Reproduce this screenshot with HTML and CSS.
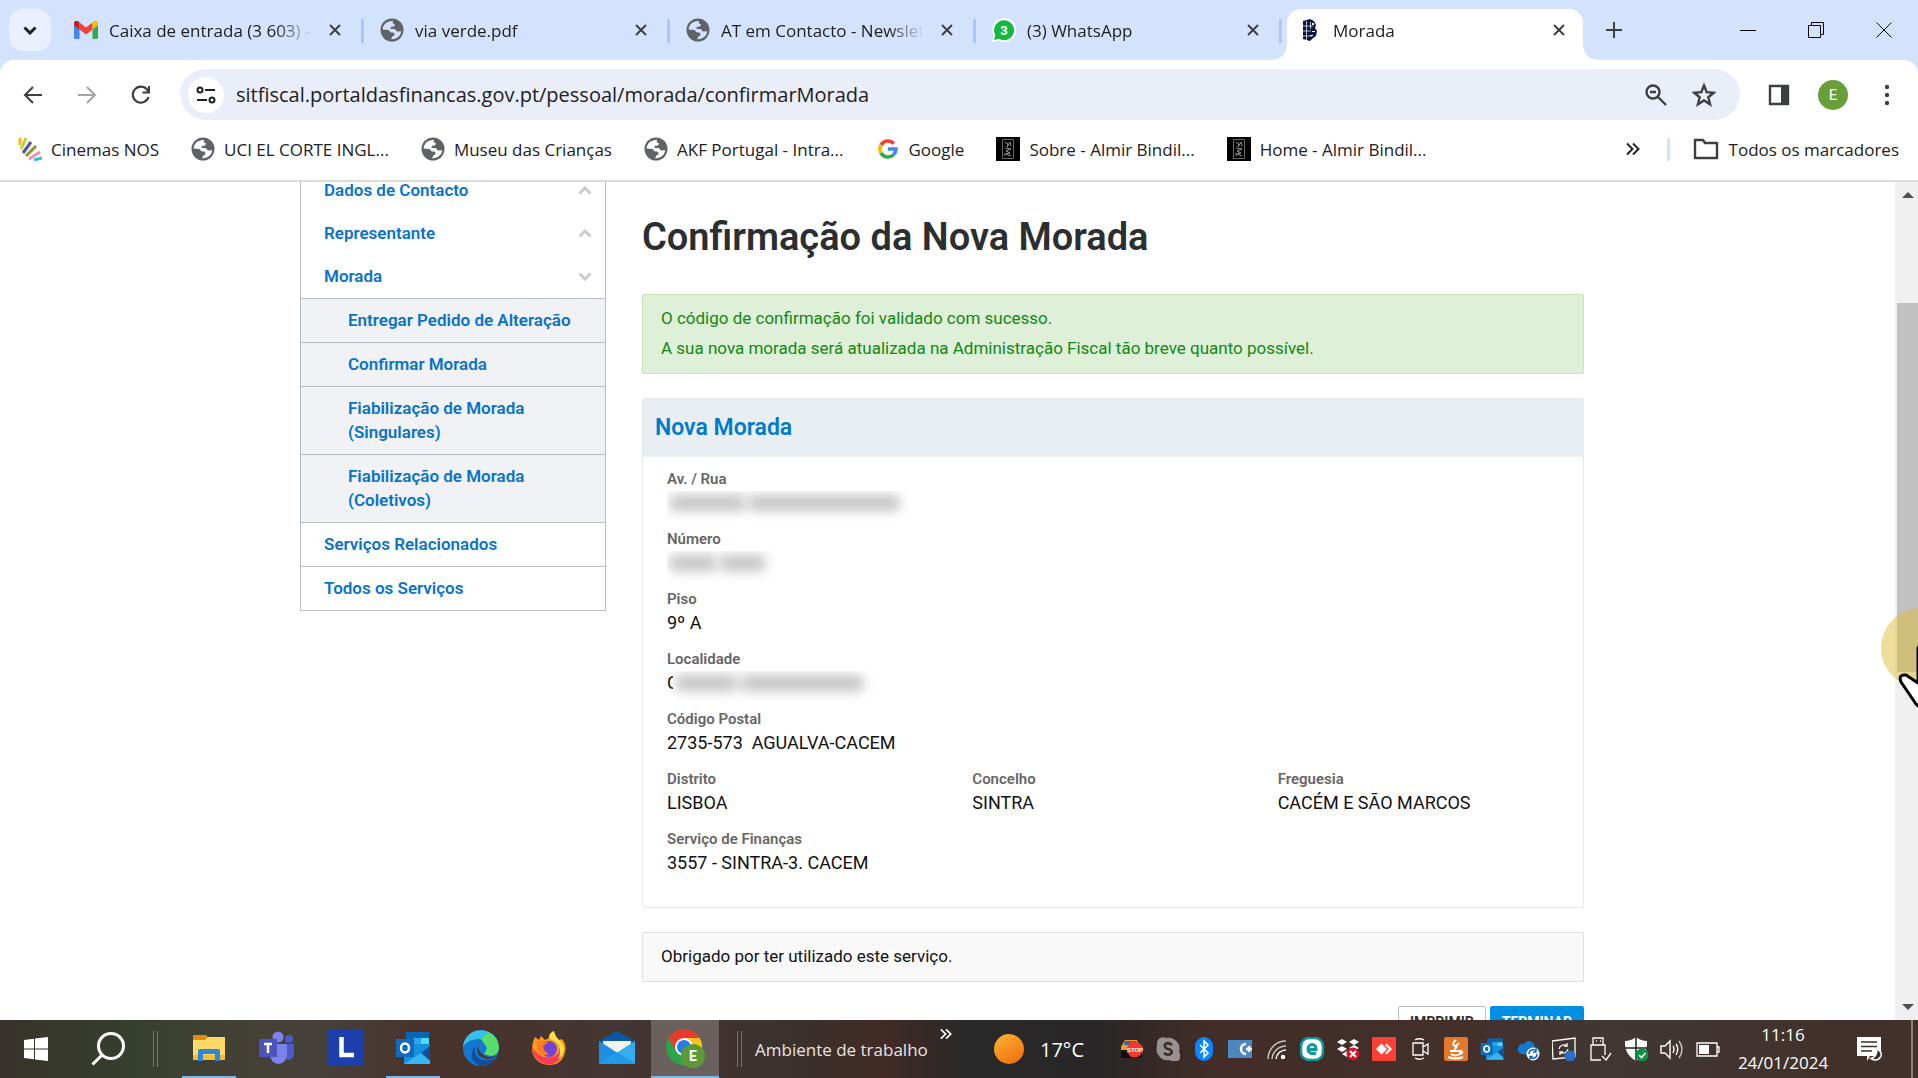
FILE: index.html
```html
<!DOCTYPE html>
<html lang="pt">
<head>
	<meta charset="UTF-8">
	<title>Morada</title>
	<link rel="stylesheet" href="styles.css">
</head>
<body>
	<svg class="defs" width="0" height="0">
		<symbol id="globe" viewBox="0 0 24 24">
			<circle cx="12" cy="12" r="11.5" fill="#5f6368"/>
			<path fill="currentColor" d="M10 3.2 13 2.8 12.6 5 15 6.4 14 8.4 11 8.8 10.4 11 14.6 11 17 13.6 21.3 13.2 A9.4 9.4 0 0 1 11 21.3 L12.4 18.4 14.6 17.2 14 14.8 10.4 14.2 8.6 12 2.6 11.6 A9.4 9.4 0 0 1 10 3.2Z"/>
		</symbol>
		<symbol id="close" viewBox="0 0 14 14">
			<path d="M2 2 12 12M12 2 2 12" fill="none" stroke="currentColor" stroke-width="2"/>
		</symbol>
		<symbol id="angle" viewBox="0 0 14 9">
			<path d="M1.5 7.5 7 2 12.5 7.5" fill="none" stroke="currentColor" stroke-width="3"/>
		</symbol>
		<symbol id="more" viewBox="0 0 14 14">
			<path d="M1 1.500 6.500 7 1 12.500M7 1.500 12.500 7 7 12.500" fill="none" stroke="currentColor" stroke-width="2"/>
		</symbol>
		<symbol id="poster" viewBox="0 0 24 24">
			<path fill="#000" d="M0 0H24V24H0Z"/>
			<path fill="none" stroke="#666" d="M6.500 2.500H17.500V21.500H6.500Z"/>
			<path fill="none" stroke="#999" d="M9 5 12 7 11 10 14 5 15 9M9 11 15 12 10 14 14 16 10 17 15 19M9 19V16"/>
		</symbol>
		<symbol id="outlook" viewBox="0 0 36 36">
			<path fill="#0a64b4" d="M11 2H34V20H11Z"/>
			<path fill="#28a8ea" d="M18 8H26V14H18Z"/>
			<path fill="#50d9ff" d="M26 8H34V14H26Z"/>
			<path fill="#1490df" d="M9 14H35V34H9Z"/>
			<path fill="#0f4f93" d="M26 23 35 16V31Z"/>
			<path fill="#35b8f1" d="M9 34 26 23 35 31V34Z"/>
			<path fill="#0f6cbd" d="M1 9H19V27H1Z"/>
			<ellipse cx="10" cy="18" rx="4" ry="4.500" fill="none" stroke="#fff" stroke-width="2.500"/>
		</symbol>
	</svg>

	<div class="browser">
		<div class="tabs">
			<button class="tab-search" aria-label="Pesquisar separadores"><svg width="14" height="9"><use href="#angle"/></svg></button>
			<div class="tab">
				<svg class="fav" viewBox="0 0 24 24">
					<path fill="#4285f4" d="M0 5 5.500 9V21H1.500A1.500 1.500 0 0 1 0 19.500Z"/>
					<path fill="#34a853" d="M24 5 18.500 9V21H22.500A1.500 1.500 0 0 0 24 19.500Z"/>
					<path fill="#ea4335" d="M5.500 4.500 12 9.500 18.500 4.500V11.500L12 16.500 5.500 11.500Z"/>
					<path fill="#c5221f" d="M0 6V5C0 2.500 3 2 4.500 3.500L5.500 4.500V11.500L0 7.500Z"/>
					<path fill="#fbbc04" d="M24 6V5C24 2.500 21 2 19.500 3.500L18.500 4.500V11.500L24 7.500Z"/>
				</svg>
				<span class="tab-title">Caixa de entrada (3 603) -</span>
				<button class="tab-close" aria-label="Fechar"><svg width="14" height="14"><use href="#close"/></svg></button>
			</div>
			<div class="tab">
				<svg class="fav"><use href="#globe"/></svg>
				<span class="tab-title">via verde.pdf</span>
				<button class="tab-close" aria-label="Fechar"><svg width="14" height="14"><use href="#close"/></svg></button>
			</div>
			<div class="tab">
				<svg class="fav"><use href="#globe"/></svg>
				<span class="tab-title">AT em Contacto - Newsletter</span>
				<button class="tab-close" aria-label="Fechar"><svg width="14" height="14"><use href="#close"/></svg></button>
			</div>
			<div class="tab">
				<svg class="fav" viewBox="0 0 24 24">
					<path fill="#fff" d="M0 24 1.500 17A12 12 0 1 1 7 22.800Z"/>
					<path fill="#12b83f" d="M2 22 3.300 17A10 10 0 1 1 7 20.800Z"/>
					<text x="12" y="17" text-anchor="middle" class="wa-count">3</text>
				</svg>
				<span class="tab-title">(3) WhatsApp</span>
				<button class="tab-close" aria-label="Fechar"><svg width="14" height="14"><use href="#close"/></svg></button>
			</div>
			<div class="tab active">
				<svg class="fav" viewBox="0 0 24 24">
					<path fill="#0c1440" d="M5 3 12 1 16 3 18 7 17 10 19 13 18 18 15 20 12 23 5 21Z"/>
					<path fill="none" stroke="#fff" stroke-width=".7" d="M5 8H15M5 13H13M5 18H14M8.500 3V22M12.500 4V11"/>
					<path fill="#fff" d="M14 5H16V7H14ZM14 13H17V14H14ZM12 17H15V18H12Z"/>
				</svg>
				<span class="tab-title">Morada</span>
				<button class="tab-close" aria-label="Fechar"><svg width="14" height="14"><use href="#close"/></svg></button>
			</div>
			<button class="new-tab" aria-label="Novo separador"><svg width="16" height="16"><path d="M8 0V16M0 8H16" stroke="#3c4043" stroke-width="2"/></svg></button>
			<div class="win">
				<button aria-label="Minimizar"><svg width="16" height="16"><path d="M0 8.500H16" stroke="#000"/></svg></button>
				<button aria-label="Restaurar"><svg width="16" height="16"><path d="M.500 3.500H12.500V15.500H.500ZM3.500 3.500V.500H15.500V12.500H12.500" fill="none" stroke="#000"/></svg></button>
				<button aria-label="Fechar janela"><svg width="16" height="16"><path d="M.500.500 15.500 15.500M15.500.500.500 15.500" stroke="#000"/></svg></button>
			</div>
		</div>

		<div class="toolbar">
			<button class="nav" aria-label="Anterior"><svg width="20" height="20"><path d="M19 10H2M10 2 2 10 10 18" fill="none" stroke="#3c4043" stroke-width="2"/></svg></button>
			<button class="nav" aria-label="Seguinte"><svg width="20" height="20"><path d="M1 10H18M10 2 18 10 10 18" fill="none" stroke="#a6a3a3" stroke-width="2"/></svg></button>
			<button class="nav" aria-label="Recarregar"><svg width="20" height="20"><path d="M17.500 12A8 8 0 1 1 16 4.500L18 7" fill="none" stroke="#3c4043" stroke-width="2.200"/><path d="M19 1V8.500H11.500V6.500H17V1Z" fill="#3c4043"/></svg></button>
			<div class="omnibox">
				<button class="site-info" aria-label="Informações do site">
					<svg width="20" height="18" fill="none" stroke="#202124" stroke-width="2"><circle cx="4" cy="4" r="2.500"/><path d="M9 4H19M1 14H11"/><circle cx="16" cy="14" r="2.500"/></svg>
				</button>
				<input class="url" type="text" aria-label="Endereço" value="sitfiscal.portaldasfinancas.gov.pt/pessoal/morada/confirmarMorada">
				<button aria-label="Zoom"><svg width="24" height="24" fill="none" stroke="#3c4043" stroke-width="2.400"><circle cx="9" cy="9" r="6.500"/><path d="M14 14 22 22M6 9H12"/></svg></button>
				<button aria-label="Marcar"><svg width="24" height="24"><path d="M12 2.500 14.700 9.200 21.800 9.700 16.300 14.300 18.100 21.300 12 17.500 5.900 21.300 7.700 14.300 2.200 9.700 9.300 9.200Z" fill="none" stroke="#3c4043" stroke-width="2.400"/></svg></button>
			</div>
			<button class="side" aria-label="Painel lateral"><svg width="22" height="22"><path d="M2 2H20V20H2Z" fill="none" stroke="#3c4043" stroke-width="2.400"/><path d="M13 2H20V20H13Z" fill="#3c4043"/></svg></button>
			<button class="avatar" aria-label="Perfil">E</button>
			<button class="menu" aria-label="Menu"><svg width="6" height="22" fill="#3c4043"><circle cx="3" cy="3" r="2.200"/><circle cx="3" cy="11" r="2.200"/><circle cx="3" cy="19" r="2.200"/></svg></button>
		</div>

		<div class="bookmarks">
			<a href="#"><svg class="fav" viewBox="0 0 24 24" fill="none" stroke-width="3"><path stroke="#f5b81f" d="M2 1V8"/><path stroke="#c3d52b" d="M8 1 3 12"/><path stroke="#5a4fa8" d="M13 5 5 16"/><path stroke="#7d9c2c" d="M18 9 8 19"/><path stroke="#ee8fc0" d="M22 15 11 22"/><path stroke="#2fc4cc" d="M24 21 16 23"/></svg>Cinemas NOS</a>
			<a href="#"><svg class="fav"><use href="#globe"/></svg>UCI EL CORTE INGL...</a>
			<a href="#"><svg class="fav"><use href="#globe"/></svg>Museu das Crianças</a>
			<a href="#"><svg class="fav"><use href="#globe"/></svg>AKF Portugal - Intra...</a>
			<a href="#"><svg class="fav" viewBox="0 0 24 24" fill="none" stroke-width="3.600"><path stroke="#ea4335" d="M5 8A8 8 0 0 1 17.800 6.500"/><path stroke="#fbbc05" d="M5 16A8 8 0 0 1 5 8"/><path stroke="#34a853" d="M17.500 17.800A8 8 0 0 1 5 16"/><path stroke="#4285f4" d="M12 12H20A8 8 0 0 1 17.500 17.800"/></svg>Google</a>
			<a href="#"><svg class="fav"><use href="#poster"/></svg>Sobre - Almir Bindil...</a>
			<a href="#"><svg class="fav"><use href="#poster"/></svg>Home - Almir Bindil...</a>
			<button class="overflow" aria-label="Mais marcadores"><svg width="14" height="14"><use href="#more"/></svg></button>
			<a class="all" href="#"><svg width="26" height="22"><path d="M2 2H10L12 5H24V20H2Z" fill="none" stroke="#3c4043" stroke-width="2.400" stroke-linejoin="round"/></svg>Todos os marcadores</a>
		</div>

		<div class="viewport">
			<div class="page">
				<nav class="sidebar">
					<ul>
						<li><a href="#">Dados de Contacto <svg width="14" height="9"><use href="#angle"/></svg></a></li>
						<li><a href="#">Representante <svg width="14" height="9"><use href="#angle"/></svg></a></li>
						<li><a href="#">Morada <svg class="down" width="14" height="9"><use href="#angle"/></svg></a>
							<ul class="sub">
								<li><a href="#">Entregar Pedido de Alteração</a></li>
								<li><a href="#">Confirmar Morada</a></li>
								<li><a href="#">Fiabilização de Morada (Singulares)</a></li>
								<li><a href="#">Fiabilização de Morada (Coletivos)</a></li>
							</ul>
						</li>
						<li class="line"><a href="#">Serviços Relacionados</a></li>
						<li class="line"><a href="#">Todos os Serviços</a></li>
					</ul>
				</nav>
				<main>
					<h1>Confirmação da Nova Morada</h1>
					<div class="alert">
						<p>O código de confirmação foi validado com sucesso.</p>
						<p>A sua nova morada será atualizada na Administração Fiscal tão breve quanto possível.</p>
					</div>
					<section class="panel">
						<h2>Nova Morada</h2>
						<dl>
							<div class="wide"><dt>Av. / Rua</dt><dd><span class="redact long"><i></i><i></i></span></dd></div>
							<div class="wide"><dt>Número</dt><dd><span class="redact short"><i></i><i></i></span></dd></div>
							<div class="wide"><dt>Piso</dt><dd>9º A</dd></div>
							<div class="wide"><dt>Localidade</dt><dd>C<span class="redact mid"><i></i><i></i></span></dd></div>
							<div class="wide"><dt>Código Postal</dt><dd>2735-573&nbsp; AGUALVA-CACEM</dd></div>
							<div><dt>Distrito</dt><dd>LISBOA</dd></div>
							<div><dt>Concelho</dt><dd>SINTRA</dd></div>
							<div><dt>Freguesia</dt><dd>CACÉM E SÃO MARCOS</dd></div>
							<div class="wide"><dt>Serviço de Finanças</dt><dd>3557 - SINTRA-3. CACEM</dd></div>
						</dl>
					</section>
					<p class="note">Obrigado por ter utilizado este serviço.</p>
					<div class="actions">
						<button class="btn">IMPRIMIR</button>
						<button class="btn primary">TERMINAR</button>
					</div>
				</main>
			</div>
			<div class="scrollbar">
				<svg width="12" height="6"><path d="M0 6 6 0 12 6Z" fill="#505050"/></svg>
				<div class="track"><div class="thumb"></div></div>
				<svg width="12" height="6"><path d="M0 0 6 6 12 0Z" fill="#505050"/></svg>
			</div>
		</div>
	</div>

	<div class="taskbar">
		<button class="sys" aria-label="Iniciar"><svg width="24" height="24" fill="#fff"><path d="M0 3 10 1.800V11.500H0ZM11 1.600 24 0V11.500H11ZM0 12.500H10V22.200L0 21ZM11 12.500H24V24L11 22.400Z"/></svg></button>
		<button class="sys" aria-label="Procurar"><svg width="34" height="34" fill="none" stroke="#fff" stroke-width="3"><circle cx="20" cy="14" r="12.500"/><path d="M11 23 1.500 32.500"/></svg></button>
		<span class="grip first"></span>
		<button class="app open" aria-label="Explorador de Ficheiros"><svg width="36" height="36" viewBox="0 0 36 36"><path fill="#e08a12" d="M2 5H15L18 8V14H2Z"/><path fill="#ffd968" d="M2 10H14L17 7H34V29H2Z"/><path fill="#f5bc3a" d="M2 25H34V30H2Z"/><path fill="#2e86d6" d="M7 31V21Q7 19 9 19H27Q29 19 29 21V31H24V24H12V31Z"/></svg></button>
		<button class="app" aria-label="Teams"><svg width="36" height="36" viewBox="0 0 36 36"><circle cx="19" cy="7" r="5.500" fill="#7b83eb"/><circle cx="30" cy="9" r="4" fill="#5059c9"/><path fill="#5059c9" d="M25 14H35V24Q35 30 28 30Z"/><path fill="#7b83eb" d="M11 14H28V25A8.500 9 0 0 1 11 25Z"/><path fill="#4b53bc" d="M0 9H18V27H0Z"/><path fill="none" stroke="#fff" stroke-width="2.500" d="M5 14H13M9 14V23"/></svg></button>
		<button class="app" aria-label="L"><svg width="36" height="36"><path fill="#1d3fae" d="M0 0H36V36H0Z"/><path fill="none" stroke="#fff" stroke-width="4.500" d="M14.500 7V25H27"/></svg></button>
		<button class="app open" aria-label="Outlook"><svg width="36" height="36"><use href="#outlook"/></svg></button>
		<button class="app" aria-label="Edge"><svg width="36" height="36" viewBox="0 0 36 36"><circle cx="18" cy="18" r="18" fill="#1477cf"/><path fill="#35c1e8" d="M0 17A18 18 0 0 1 34 10L28 18Q24 8 14 9 4 10 0 17Z"/><path fill="#57dd6c" d="M25 2Q36 7 36 18 35 26 27 26L21 24 24 18 18 9Z"/><path fill="#0c4f9c" d="M12 18Q11 29 21 30 28 31 33 28 27 36 17 36 7 31 9 23 10 17 16 14 12 16 12 18Z"/><path fill="#46352f" d="M16 14Q14 20 20 25 27 29 34 25 31 29 24 29 15 28 14 20Z"/></svg></button>
		<button class="app" aria-label="Firefox"><svg width="36" height="36" viewBox="0 0 36 36"><path fill="#ff9a1f" d="M4 7 8 10 10 6 14 10 18 8Q18 3 23 1 24 7 28 10L31 9Q36 15 34 22 31 35 18 35 4 34 1 21 1 13 4 7Z"/><path fill="#ff3b53" d="M1 17Q8 29 20 27 28 26 29 17 35 24 27 31 18 38 8 31 1 26 1 17Z"/><path fill="#ffde43" d="M18 8Q18 3 23 1 24 7 30 12 34 18 32 24 30 28 27 29 32 18 25 12Z"/><circle cx="18" cy="19" r="8" fill="#7542d8"/><path fill="#ff7b22" d="M5 12Q12 9 17 13L12 16Q13 22 18 24 11 27 7 21Z"/></svg></button>
		<button class="app" aria-label="Correio"><svg width="36" height="36" viewBox="0 0 36 36"><path fill="#0a57a6" d="M0 11 18 1 36 11V16H0Z"/><path fill="#f2f2f2" d="M4 11H32V20L18 26 4 20Z"/><path fill="#1d8fe1" d="M0 11 36 34H0Z"/><path fill="#35aef1" d="M36 11 18 22.500 36 34Z"/><path fill="#1f9bea" d="M0 34 18 22 36 34Z"/></svg></button>
		<button class="app current" aria-label="Google Chrome"><svg width="40" height="40" viewBox="0 0 40 40"><circle cx="19" cy="19" r="18" fill="#2fa24c"/><path fill="#e33b2e" d="M3.400 10A18 18 0 0 1 34.600 10H19L11 23Z"/><path fill="#fcc31e" d="M34.600 10A18 18 0 0 1 19 37L27 23 19 10Z"/><circle cx="19" cy="19" r="9" fill="#fff"/><circle cx="19" cy="19" r="7" fill="#2a7ae9"/><circle cx="28" cy="28" r="12" fill="#5c9a35"/><text x="28" y="33" text-anchor="middle" class="chrome-user">E</text></svg></button>
		<span class="grip"></span>
		<span class="desk">Ambiente de trabalho</span>
		<button class="desk-more" aria-label="Mais"><svg width="12" height="12"><use href="#more"/></svg></button>

		<div class="weather"><span class="sun"></span>17°C</div>
		<div class="tray">
			<svg viewBox="0 0 24 24"><path fill="#e8a020" d="M1 10 5 3H17L19 9V20H1Z"/><path fill="#2d61b8" d="M5 4H16L18 8H4Z"/><path fill="#111" d="M1 13H22V21H1Z"/><path fill="#f2392c" d="M10 5H18L23 10V15L18 20H11L7 15V10Z"/><text x="15" y="15" text-anchor="middle" class="stop">STOP</text></svg>
			<svg viewBox="0 0 24 24"><path fill="#979290" d="M1 6A6 6 0 0 1 10 1A11 11 0 0 1 23 15A6 6 0 0 1 14 23A11 11 0 0 1 1 9Z"/><path fill="none" stroke="#3a2d2a" stroke-width="2.600" d="M16 8Q12 4.500 9 7.500 8 11 12 12 17 13 15.500 16 12 19.500 8 16"/></svg>
			<svg viewBox="0 0 24 24"><rect x="3" width="18" height="24" rx="9" fill="#0a84ff"/><path fill="none" stroke="#fff" stroke-width="1.600" d="M8 8 16 16 12 20V4L16 8 8 16"/></svg>
			<svg viewBox="0 0 24 24"><path fill="#4c87c0" d="M0 3H24V21H0Z"/><path fill="none" stroke="#fff" stroke-width="2.500" d="M18 7A5 5 0 1 0 18 17M18 12H24M21 9V15"/></svg>
			<svg viewBox="0 0 24 24" fill="none" stroke="#fff" stroke-width="1.500"><path opacity=".7" d="M4 22A18 18 0 0 1 22 4M8 22A14 14 0 0 1 22 9"/><path d="M12 22A10 10 0 0 1 22 13"/><circle cx="19" cy="20" r="1.500" fill="#fff"/></svg>
			<svg viewBox="0 0 24 24"><rect x="1" y="1" width="22" height="22" rx="8" fill="#fff" stroke="#10989a" stroke-width="2.500"/><path fill="none" stroke="#10989a" stroke-width="3" d="M8 12.500H16Q16 7.500 12 7.500 8 8 8 12.500 9 18 16 16"/></svg>
			<svg viewBox="0 0 24 24"><path fill="#fff" d="M1 5 6 2 11 5 6 8ZM13 5 18 2 23 5 18 8ZM1 12 6 9 11 12 6 15ZM13 11 18 8 23 11 18 14ZM6 17 11 14V20Z"/><circle cx="17" cy="17" r="6.500" fill="#d3122b"/><path stroke="#fff" stroke-width="2" d="M14 14 20 20M20 14 14 20"/></svg>
			<svg viewBox="0 0 24 24"><path fill="#fb4134" d="M0 0H24V24H0Z"/><path fill="#fff" d="M4 12 9.500 6.500 15 12 9.500 17.500ZM13 8 14.500 6.500 20 12 14.500 17.500 13 16 17 12Z"/></svg>
			<svg viewBox="0 0 24 24" fill="none" stroke="#fff" stroke-width="1.300"><path d="M5 6H15V18H5ZM15 10 20 7V17L15 14M7 3Q11 .500 16 3M7 21Q11 23.500 16 21"/></svg>
			<svg viewBox="0 0 24 24"><rect width="24" height="24" rx="2" fill="#e3782a"/><path fill="none" stroke="#fff" stroke-width="2" d="M12 3Q7 7 11 9 13 11 10 13M15 6Q11 9 13 11M6 14H16V17Q11 20 7 17M16 14Q20 14 17 17M4 20Q12 23 19 20"/></svg>
			<svg viewBox="0 0 36 36"><use href="#outlook"/></svg>
			<svg viewBox="0 0 24 24"><path fill="#1479d2" d="M5 17A5 5 0 0 1 3 9Q5 6 8 7 11 2 16 5 19 7 19 10 23 10 23 14L18 18Z"/><circle cx="17" cy="17" r="6.500" fill="#fff"/><path fill="none" stroke="#1467c2" stroke-width="1.500" d="M13 17A4 4 0 0 1 20 14M21 17A4 4 0 0 1 14 20M20 11.500V15H17M14 22.500V19.500H17"/></svg>
			<svg viewBox="0 0 24 24" fill="none" stroke="#fff" stroke-width="1.300"><path d="M0 4 23 1V20L1 22ZM7 12A5 5 0 0 1 15 9V6M15 9H12M16 12A5 5 0 0 1 8 15V18M8 15H11"/><circle cx="18" cy="19" r="5.500" fill="#2b6fc6" stroke="none"/></svg>
			<svg viewBox="0 0 24 24" fill="none" stroke="#fff" stroke-width="1.300"><path d="M5 8V1H15V8M13 23H3V8H17V18M8 4H9M12 4H13M14 19 18 23 23 16"/></svg>
			<svg viewBox="0 0 24 24"><path fill="#fff" d="M12 0Q17 4 23 4 24 17 12 24 0 17 1 4 7 4 12 0Z"/><path stroke="#222" stroke-width="1.500" d="M12 0V24M1 11H23"/><circle cx="18" cy="18" r="6.500" fill="#0f9040"/><path fill="none" stroke="#fff" stroke-width="1.600" d="M15 18 17.500 20.500 21.500 16"/></svg>
			<svg viewBox="0 0 24 24" fill="none" stroke="#fff" stroke-width="1.400"><path d="M1 9H5L10 4V21L5 16H1ZM13 9Q15 12 13 16M16 7Q19.500 12 16 18"/><path opacity=".7" d="M19 4Q25 12 19 21"/></svg>
			<svg viewBox="0 0 24 24"><path fill="none" stroke="#fff" stroke-width="1.300" d="M1 6H21V19H1ZM21 10H23V15H21"/><path fill="#fff" d="M3 8H13V17H3Z"/></svg>
		</div>
		<div class="clock"><span>11:16</span><span>24/01/2024</span></div>
		<button class="notify" aria-label="Notificações"><svg width="26" height="26" viewBox="0 0 26 26"><path fill="#fff" d="M0 1H24V20H13L10 25V20H0Z"/><path stroke="#3c2d28" stroke-width="1.500" d="M4 6H20M4 10.500H20M4 15H15"/><path fill="#3c2d28" stroke="#fff" stroke-width="1.500" d="M20 13Q26 16 23.500 21 20 26 14 22.500 20 21 20 13Z"/></svg></button>
		<span class="show-desktop"></span>
	</div>

	<div class="pointer">
		<svg width="80" height="110"><circle cx="40" cy="40" r="40" fill="#e0bd38" opacity=".5"/><path d="M42 102 35 96 20 74Q17 66 25 67L37 75V40Q41 34 46 40V60L70 66V90L62 104Z" fill="#fff" stroke="#000" stroke-width="3" stroke-linejoin="round"/></svg>
	</div>
</body>
</html>
```
FILE: styles.css
```css
* {
	margin: 0;
	padding: 0;
	box-sizing: border-box;
	list-style: none;
}
html, body {
	height: 100%;
	overflow: hidden;
}
body {
	display: flex;
	flex-direction: column;
	font-family: Roboto, "Liberation Sans", sans-serif;
	background: #fff;
	color: #111;
}
button {
	border: 0;
	background: none;
	font: inherit;
	color: inherit;
}
a {
	color: inherit;
	text-decoration: none;
}
svg {
	display: block;
	flex: none;
}
.defs {
	position: absolute;
}
.browser {
	flex: 1;
	min-height: 0;
	display: flex;
	flex-direction: column;
	background: #d3e3fd;
}
.fav {
	width: 24px;
	height: 24px;
	color: #fff;
}

/* tab strip */
.tabs {
	display: flex;
	align-items: center;
	height: 60px;
	padding-left: 9px;
	font-family: "Open Sans", sans-serif;
	font-size: 17px;
	color: #202124;
}
.tab-search {
	display: flex;
	align-items: center;
	justify-content: center;
	width: 42px;
	height: 42px;
	margin-right: 7px;
	border-radius: 14px;
	background: #e9f1fe;
}
.tab-search svg {
	transform: rotate(180deg);
}
.tab {
	flex: 0 1 306px;
	min-width: 0;
	position: relative;
	display: flex;
	align-items: center;
	height: 60px;
	padding: 2px 16px;
}
.tab .fav {
	color: #d3e3fd;
}
.tab:not(.active)::after {
	content: "";
	position: absolute;
	right: 0;
	top: 19px;
	width: 3px;
	height: 24px;
	background: #a8c7fa;
}
.tab-title {
	flex: 1;
	min-width: 0;
	margin: 0 10px 0 11px;
	overflow: hidden;
	white-space: nowrap;
	-webkit-mask-image: linear-gradient(to right, #000 82%, transparent);
	mask-image: linear-gradient(to right, #000 82%, transparent);
}
.tab-close {
	padding: 6px;
	color: #3c4043;
}
.tab.active {
	z-index: 1;
}
.tab.active::before {
	content: "";
	position: absolute;
	z-index: -1;
	left: 5px;
	right: 5px;
	top: 9px;
	bottom: 0;
	border-radius: 14px 14px 0 0;
	background: #fff;
}
.tab.active::after {
	content: "";
	position: absolute;
	z-index: -1;
	left: -9px;
	right: -9px;
	bottom: 0;
	height: 14px;
	background:
		radial-gradient(circle at 0 0, transparent 13px, #fff 14px) left / 14px 14px no-repeat,
		radial-gradient(circle at 100% 0, transparent 13px, #fff 14px) right / 14px 14px no-repeat;
}
.wa-count {
	font: bold 13px Roboto, sans-serif;
	fill: #fff;
}
.new-tab {
	padding: 18px;
}
.win {
	display: flex;
	margin-left: auto;
}
.win button {
	display: flex;
	justify-content: center;
	width: 68px;
}

/* toolbar */
.toolbar {
	display: flex;
	align-items: center;
	height: 68px;
	padding: 1px 8px 0 6px;
	border-radius: 14px 14px 0 0;
	background: #fff;
}
.nav {
	display: flex;
	justify-content: center;
	width: 54px;
}
.omnibox {
	flex: 1;
	display: flex;
	align-items: center;
	gap: 24px;
	height: 51px;
	margin: 0 28px 0 12px;
	padding: 0 24px 0 8px;
	border-radius: 26px;
	background: #eaeef8;
}
.site-info {
	display: flex;
	align-items: center;
	justify-content: center;
	width: 36px;
	height: 36px;
	border-radius: 50%;
	background: #fff;
}
.url {
	flex: 1;
	min-width: 0;
	margin-left: -12px;
	border: 0;
	outline: 0;
	background: none;
	font-family: "Open Sans", sans-serif;
	font-size: 20px;
	color: #202124;
}
.avatar {
	width: 30px;
	height: 30px;
	margin: 0 36px 0 28px;
	border-radius: 50%;
	background: #689f38;
	font-size: 15px;
	color: #fff;
}
.menu {
	margin-right: 20px;
}

/* bookmarks */
.bookmarks {
	display: flex;
	align-items: center;
	height: 54px;
	padding: 0 19px 10px 18px;
	gap: 32px;
	border-bottom: 2px solid #dcdcdc;
	background: #fff;
	font-family: "Open Sans", sans-serif;
	font-size: 17px;
	color: #202124;
	white-space: nowrap;
}
.bookmarks a {
	display: flex;
	align-items: center;
	gap: 9px;
}
.overflow {
	margin-left: auto;
	margin-right: -5px;
}
.bookmarks .all {
	gap: 10px;
	padding-left: 23px;
	border-left: 3px solid #d3e3fd;
}

/* page */
.viewport {
	flex: 1;
	min-height: 0;
	display: flex;
	overflow: hidden;
	background: #fff;
}
.page {
	flex: 0 1 1295px;
	display: flex;
	align-items: flex-start;
	gap: 36px;
	margin: -13px auto 0;
	padding-right: 11px;
}
.sidebar {
	width: 306px;
	flex: none;
	border: 1px solid #b9bec3;
	border-top: 0;
	font-size: 17px;
	font-weight: 600;
	line-height: 24px;
	color: #0a73c8;
}
.sidebar a {
	display: flex;
	align-items: center;
	justify-content: space-between;
	padding: 9px 13px 10px 23px;
}
.sidebar svg {
	color: #ccc;
}
.sidebar .down {
	transform: rotate(180deg);
}
.sub li, .line {
	border-top: 1px solid #b9bec3;
}
.sub {
	background: #f0f2f5;
}
.sub a {
	padding-left: 47px;
	padding-right: 60px;
}
.sub li:first-child a {
	padding-right: 0;
}
main {
	flex: 1;
	min-width: 0;
}
h1 {
	margin-top: 43px;
	font-size: 38px;
	font-weight: 600;
	line-height: 50px;
	color: #2c2f31;
}
.alert {
	margin-top: 32px;
	padding: 8px 18px 10px;
	border: 1px solid #c6e6b5;
	border-radius: 2px;
	background: #dff0d8;
	font-size: 17px;
	line-height: 30px;
	color: #118812;
}
.panel {
	margin-top: 24px;
	border: 1px solid #e4eaec;
	border-radius: 2px;
}
h2 {
	padding: 14px 12px;
	background: #e8eef2;
	font-size: 23px;
	font-weight: 600;
	line-height: 30px;
	color: #007bcb;
}
dl {
	display: grid;
	grid-template-columns: repeat(3, 1fr);
	row-gap: 14px;
	padding: 11px 0 33px 24px;
	line-height: 23px;
}
.wide {
	grid-column: 1 / -1;
}
dt {
	font-size: 15px;
	font-weight: 600;
	color: #666;
}
dd {
	display: flex;
	height: 23px;
	font-size: 18px;
}
.redact {
	display: flex;
	gap: 4px;
	height: 30px;
	padding: 4px 14px 10px 3px;
	overflow: hidden;
	background: #fff;
}
.redact i {
	flex: 1;
	background: #c4c4c4;
	filter: blur(6px);
}
.redact i + i {
	flex: 2;
}
.long {
	width: 246px;
}
.short {
	width: 112px;
}
.short i + i {
	flex: 1;
}
.mid {
	width: 204px;
	margin-left: -6px;
}
.note {
	margin-top: 24px;
	padding: 8px 18px 10px;
	border: 1px solid #dfdfdf;
	border-radius: 2px;
	background: #f9f9f9;
	font-size: 17px;
	line-height: 30px;
}
.actions {
	display: flex;
	justify-content: flex-end;
	gap: 4px;
	margin-top: 24px;
}
.btn {
	padding: 0 11px;
	border: 1px solid #bbb;
	border-radius: 2px;
	font-size: 14px;
	font-weight: 700;
	line-height: 30px;
	color: #333;
}
.primary {
	border-color: #0090e3;
	background: #0090e3;
	color: #fff;
}
.scrollbar {
	display: flex;
	flex-direction: column;
	align-items: center;
	width: 23px;
	padding: 10px 0 10px 2px;
	background: #f0f0f0;
}
.track {
	flex: 1;
	width: 100%;
	padding: 105px 0 332px;
}
.thumb {
	height: 100%;
	background: #c1c1c1;
}

/* taskbar */
.taskbar {
	display: flex;
	align-items: center;
	height: 58px;
	flex: none;
	background: linear-gradient(to right, #37322a, #363f2e 7%, #434135 12%, #46403a 17%, #4a322c 22%, #443632 32%, #3b302c 42%, #432a25 46%, #2a2929 50%, #282626 57%, #422d28 63%, #43302b 77%, #403834 84%, #42302a 96%);
	color: #fff;
	font-family: "Open Sans", sans-serif;
	font-size: 17px;
	white-space: nowrap;
}
.sys {
	display: flex;
	justify-content: center;
	width: 72px;
}
.grip {
	width: 5px;
	height: 36px;
	margin: 0 13px 0 18px;
	border: solid #777268;
	border-width: 0 1px;
}
.grip.first {
	margin: 0 17px 0 9px;
}
.app {
	display: flex;
	align-items: center;
	justify-content: center;
	width: 68px;
	height: 58px;
	border-bottom: 2px solid transparent;
	background-clip: padding-box;
}
.open {
	background: linear-gradient(#76b9ed, #76b9ed) center 56px / 54px 2px no-repeat border-box;
}
.current {
	border-bottom-color: #76b9ed;
	background-color: #6a615c;
}
.chrome-user {
	font: bold 14px Roboto, sans-serif;
	fill: #fff;
}
.desk {
	color: #e8e4e2;
}
.desk-more {
	margin: 0 12px 30px;
}
.weather {
	display: flex;
	align-items: center;
	gap: 16px;
	margin: 0 30px 0 auto;
	font-size: 20px;
}
.sun {
	width: 30px;
	height: 30px;
	border-radius: 50%;
	background: linear-gradient(150deg, #fbb32e, #f06a10);
}
.tray {
	display: flex;
	gap: 12px;
	padding: 0 6px;
}
.tray svg {
	width: 24px;
	height: 24px;
}
.stop {
	font: bold 6px "Liberation Sans", sans-serif;
	fill: #fff;
}
.clock {
	display: flex;
	flex-direction: column;
	align-items: center;
	width: 114px;
	line-height: 28px;
}
.notify {
	display: flex;
	justify-content: center;
	width: 60px;
}
.show-desktop {
	width: 18px;
	height: 58px;
	border-right: 5px solid transparent;
	background: linear-gradient(#8a807c, #8a807c) right / 2px 100% no-repeat padding-box;
}

/* mouse pointer over the scrollbar */
.pointer {
	position: absolute;
	left: calc(100% - 37px);
	top: 608px;
	width: 37px;
	overflow: hidden;
}
```
